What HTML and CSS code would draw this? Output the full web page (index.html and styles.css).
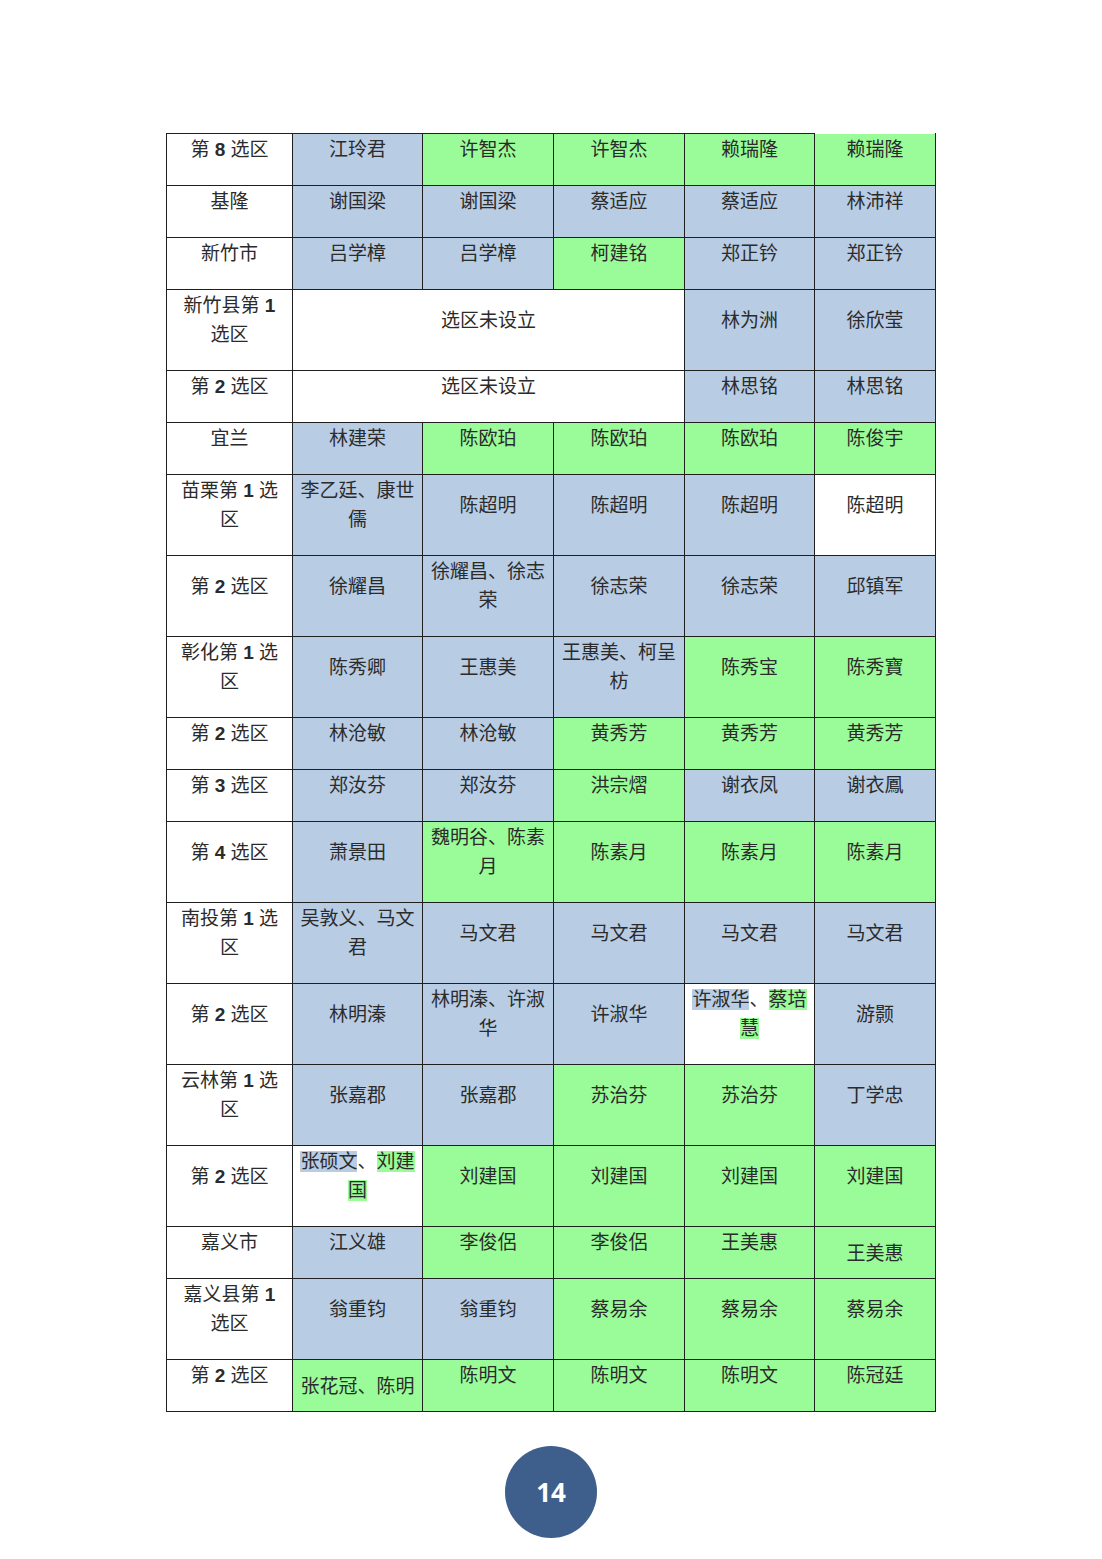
FILE: index.html
```html
<!DOCTYPE html>
<html lang="zh-CN">
<head>
<meta charset="utf-8">
<title>选区表</title>
<link rel="stylesheet" href="styles.css">
</head>
<body>
<div class="page">
<table class="grid">
<colgroup>
<col class="c1"><col class="c2"><col class="c3"><col class="c4"><col class="c5"><col class="c6">
</colgroup>
<tbody>
<tr class="r1"><td class="w">第 <span class="n">8</span> 选区</td><td class="b">江玲君</td><td class="g">许智杰</td><td class="g">许智杰</td><td class="g">赖瑞隆</td><td class="g top0">赖瑞隆</td></tr>
<tr class="r1"><td class="w">基隆</td><td class="b">谢国梁</td><td class="b">谢国梁</td><td class="b">蔡适应</td><td class="b">蔡适应</td><td class="b">林沛祥</td></tr>
<tr class="r1"><td class="w">新竹市</td><td class="b">吕学樟</td><td class="b">吕学樟</td><td class="g">柯建铭</td><td class="b">郑正钤</td><td class="b">郑正钤</td></tr>
<tr class="r2"><td class="w">新竹县第 <span class="n">1</span><br>选区</td><td class="w" colspan="3">选区未设立</td><td class="b">林为洲</td><td class="b">徐欣莹</td></tr>
<tr class="r1"><td class="w">第 <span class="n">2</span> 选区</td><td class="w" colspan="3">选区未设立</td><td class="b">林思铭</td><td class="b">林思铭</td></tr>
<tr class="r1"><td class="w">宜兰</td><td class="b">林建荣</td><td class="g">陈欧珀</td><td class="g">陈欧珀</td><td class="g">陈欧珀</td><td class="g">陈俊宇</td></tr>
<tr class="r2"><td class="w">苗栗第 <span class="n">1</span> 选<br>区</td><td class="b">李乙廷、康世<br>儒</td><td class="b">陈超明</td><td class="b">陈超明</td><td class="b">陈超明</td><td class="w">陈超明</td></tr>
<tr class="r2"><td class="w">第 <span class="n">2</span> 选区</td><td class="b">徐耀昌</td><td class="b">徐耀昌、徐志<br>荣</td><td class="b">徐志荣</td><td class="b">徐志荣</td><td class="b">邱镇军</td></tr>
<tr class="r2"><td class="w">彰化第 <span class="n">1</span> 选<br>区</td><td class="b">陈秀卿</td><td class="b">王惠美</td><td class="b">王惠美、柯呈<br>枋</td><td class="g">陈秀宝</td><td class="g">陈秀寶</td></tr>
<tr class="r1"><td class="w">第 <span class="n">2</span> 选区</td><td class="b">林沧敏</td><td class="b">林沧敏</td><td class="g">黄秀芳</td><td class="g">黄秀芳</td><td class="g">黄秀芳</td></tr>
<tr class="r1"><td class="w">第 <span class="n">3</span> 选区</td><td class="b">郑汝芬</td><td class="b">郑汝芬</td><td class="g">洪宗熠</td><td class="b">谢衣凤</td><td class="b">谢衣鳳</td></tr>
<tr class="r2"><td class="w">第 <span class="n">4</span> 选区</td><td class="b">萧景田</td><td class="g">魏明谷、陈素<br>月</td><td class="g">陈素月</td><td class="g">陈素月</td><td class="g">陈素月</td></tr>
<tr class="r2"><td class="w">南投第 <span class="n">1</span> 选<br>区</td><td class="b">吴敦义、马文<br>君</td><td class="b">马文君</td><td class="b">马文君</td><td class="b">马文君</td><td class="b">马文君</td></tr>
<tr class="r2"><td class="w">第 <span class="n">2</span> 选区</td><td class="b">林明溱</td><td class="b">林明溱、许淑<br>华</td><td class="b">许淑华</td><td class="w"><span class="hb">许淑华</span>、<span class="hg">蔡培<br>慧</span></td><td class="b">游颢</td></tr>
<tr class="r2"><td class="w">云林第 <span class="n">1</span> 选<br>区</td><td class="b">张嘉郡</td><td class="b">张嘉郡</td><td class="g">苏治芬</td><td class="g">苏治芬</td><td class="b">丁学忠</td></tr>
<tr class="r2"><td class="w">第 <span class="n">2</span> 选区</td><td class="w"><span class="hb">张硕文</span>、<span class="hg">刘建<br>国</span></td><td class="g">刘建国</td><td class="g">刘建国</td><td class="g">刘建国</td><td class="g">刘建国</td></tr>
<tr class="r1"><td class="w">嘉义市</td><td class="b">江义雄</td><td class="g">李俊侶</td><td class="g">李俊侶</td><td class="g">王美惠</td><td class="g mid">王美惠</td></tr>
<tr class="r2"><td class="w">嘉义县第 <span class="n">1</span><br>选区</td><td class="b">翁重钧</td><td class="b">翁重钧</td><td class="g">蔡易余</td><td class="g">蔡易余</td><td class="g">蔡易余</td></tr>
<tr class="r1"><td class="w">第 <span class="n">2</span> 选区</td><td class="g mid">张花冠、陈明</td><td class="g">陈明文</td><td class="g">陈明文</td><td class="g">陈明文</td><td class="g">陈冠廷</td></tr>
</tbody>
</table>
<div class="pagenum">14</div>
</div>
</body>
</html>
```

FILE: styles.css
```css
html, body {
  margin: 0;
  padding: 0;
  background: #ffffff;
}

.page {
  width: 1102px;
  height: 1559px;
  padding-top: 133px;
  box-sizing: border-box;
}

.grid {
  margin-left: 166px;
  width: 769px;
  table-layout: fixed;
  border-collapse: collapse;
  font-family: "Liberation Sans", "Noto Sans CJK SC", sans-serif;
  font-size: 19px;
  line-height: 29px;
  color: #2b2b2b;
}

.c1 { width: 126px; }
.c2 { width: 130px; }
.c3 { width: 131px; }
.c4 { width: 131px; }
.c5 { width: 130px; }
.c6 { width: 121px; }

.grid td {
  border: 1px solid #1f1f1f;
  text-align: center;
  vertical-align: middle;
  padding: 1px 2px 21px;
  box-sizing: border-box;
}

.r1 td { height: 51px; }
.r2 td { height: 80px; }

.grid td.mid {
  padding: 11px 2px 10px;
}

.grid td.top0 {
  border-top-color: transparent;
}

.n { font-weight: 700; }

.w { background: #ffffff; }
.b { background: #b8cce4; }
.g { background: #99fc98; }

.hb { background: #b8cce4; }
.hg { background: #99fc98; }

.pagenum {
  width: 92px;
  height: 92px;
  border-radius: 50%;
  background: #3e5e8b;
  color: #ffffff;
  margin: 34px auto 0;
  display: flex;
  align-items: center;
  justify-content: center;
  font-family: "Open Sans", "Liberation Sans", sans-serif;
  font-weight: 700;
  font-size: 26px;
}
```
